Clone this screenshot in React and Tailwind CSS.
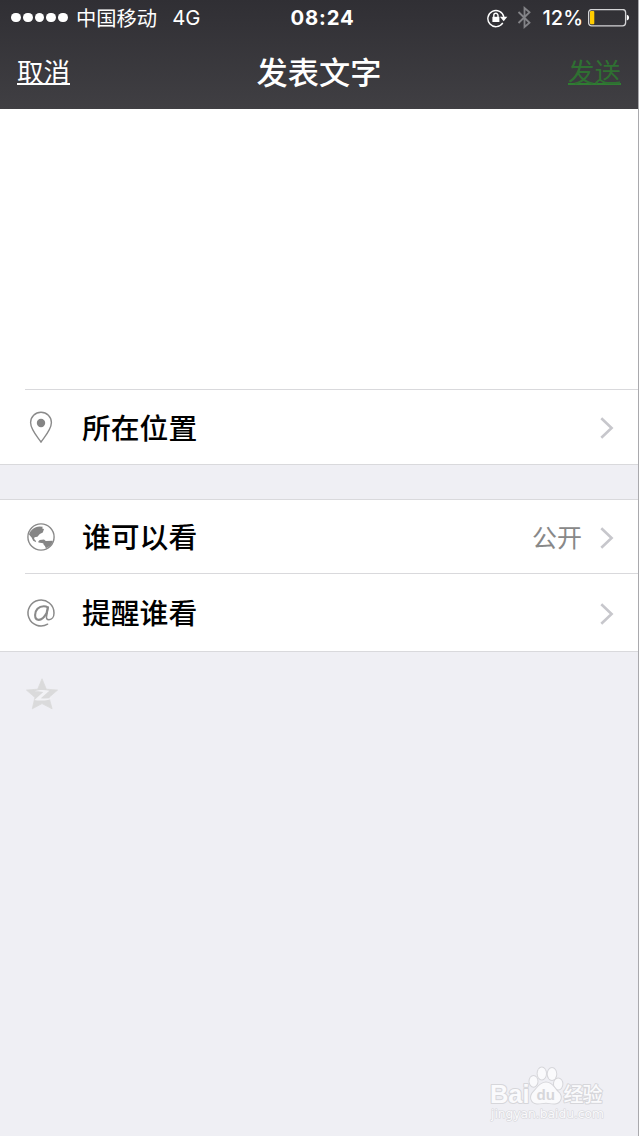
import React from "react";

const CJK = "font-['Noto_Sans_CJK_SC',sans-serif]";
const LATIN = "font-['Inter','Noto_Sans_CJK_SC',sans-serif]";

function Chevron() {
  return (
    <svg className="mt-[2px] mr-[24px] h-[22px] w-[14px] shrink-0" viewBox="0 0 14 22" fill="none">
      <path d="M1.3 1.2 11.6 11 1.3 20.8" stroke="#c7c7cc" strokeWidth="2.6" />
    </svg>
  );
}

function PinIcon() {
  return (
    <svg className="h-8 w-8" viewBox="0 0 32 32" fill="none">
      <path d="M16 31C13 26.5 5.6 19 5.6 11.6a10.4 10.4 0 0 1 20.8 0C26.4 19 19 26.5 16 31Z" stroke="#8a8a8a" strokeWidth="1.4" />
      <circle cx="16" cy="12" r="4.2" fill="#858585" />
    </svg>
  );
}

function GlobeIcon() {
  return (
    <svg className="h-8 w-8" viewBox="0 0 32 32">
      <circle cx="16" cy="16" r="13.1" fill="none" stroke="#8a8a8a" strokeWidth="1.4" />
      <path d="M4 13.5C5.2 9 9.4 5.8 14.5 5.4l3.2.4-.5 1.6 1.8.6-1.2 3.4-3 1.5-2.4 2.9-2.9.4-.4 1.8 1.5 1.4.6 1.8-3-1.5-1.6-3.2Z" fill="#858585" />
      <path d="m13.4 20.2 1.4-1.3 4.2-.3 1.8 1.4 6.4-.2.7.8c-1.4 3.3-3.8 5.5-7 6.6l-1-2.2-1.2-1.2-.5-1.6-4.8-.8Z" fill="#858585" />
    </svg>
  );
}

function AtIcon() {
  return (
    <svg className="h-8 w-8" viewBox="0 0 32 32" fill="none" stroke="#8a8a8a" strokeLinecap="round" strokeLinejoin="round">
      <path d="M22.6 27.2A13 13 0 1 1 29 16c0 4-2.2 6.7-5 6.7-2.2 0-2.9-1.3-2.4-3.5L23.2 10.2" strokeWidth="1.5" />
      <path d="M22.8 10.3c-1.4-.9-2.6-1.1-4-1.1-5.2 0-8.7 4-8.7 8.9 0 3 1.4 4.8 3.7 4.8 3.4 0 6.1-3.6 7.8-6.8l1.2-5.8" strokeWidth="2.1" />
    </svg>
  );
}

function StarIcon() {
  return (
    <svg className="h-8 w-8" viewBox="0 0 32 32">
      <path d="m16 .8 4.3 10.4 11.2.9-8.5 7.3 3.1 11.4L16 25.6 6.3 30.8l2.6-11.4L.5 12.1l11.2-.9Z" fill="#dadadb" stroke="#dadadb" strokeWidth=".8" strokeLinejoin="round" />
      <path d="M8.6 13.3c4-1.4 9.5-1.7 14.8-.6l-8.6 7.6c4.7.5 8.6.2 12.4-.9-3.4 3.1-12.6 3.9-18.8 2.6l8.9-7.9c-3.5-.8-5.8-1-8.7-.8Z" fill="#f2f2f5" />
    </svg>
  );
}

function RotationLock() {
  return (
    <svg className="h-5 w-[22px]" viewBox="0 0 22 20" fill="none" stroke="white" strokeWidth="1.4">
      <path d="M15.8 14.9A8.1 8.1 0 1 1 16.9 9" />
      <path d="M12.9 8.8h7.4l-3.6 4.4Z" fill="white" stroke="none" />
      <rect x="5.4" y="8.8" width="7" height="5.2" fill="white" stroke="none" />
      <path d="M6.8 9.3V7.4a2.1 2.1 0 0 1 4.2 0v1.9" strokeWidth="1.4" />
    </svg>
  );
}

function Bluetooth() {
  return (
    <svg className="h-[23px] w-[14px]" viewBox="0 0 14 23" fill="none" stroke="#838387" strokeWidth="1.8">
      <path d="m1.5 6 11 10.8L7.5 21V2l5 4.2-11 10.8" />
    </svg>
  );
}

function Battery() {
  return (
    <svg className="h-[18px] w-[43px]" viewBox="0 0 43 18">
      <rect x=".6" y=".6" width="37" height="16.2" rx="3" fill="none" stroke="#d4d4d6" strokeWidth="1.3" />
      <rect x="2" y="2.1" width="4.3" height="13.2" rx="1" fill="#ffcc00" />
      <path d="M38.8 5.8c3 .7 3 5 0 5.8Z" fill="white" />
    </svg>
  );
}

function Row({ icon, label, value, height }) {
  return (
    <div className={`flex items-center bg-white ${height}`}>
      <div className="ml-[25px] flex w-[57px]">{icon}</div>
      <span className={`${CJK} grow text-[28.8px] leading-none font-medium text-black`}>{label}</span>
      {value && <span className={`${CJK} mr-[18px] text-[25px] leading-none text-[#888888]`}>{value}</span>}
      <Chevron />
    </div>
  );
}

function Watermark() {
  return (
    <svg className="h-[62px] w-[122px]" viewBox="0 0 122 62">
      <g fill="#fafafc" stroke="#d6d6da" strokeWidth="2" strokeLinejoin="round" style={{ paintOrder: "stroke" }}>
        <text x="3" y="38.5" fontFamily="Liberation Sans, sans-serif" fontSize="25.5" fontWeight="700" textLength="39.5" lengthAdjust="spacingAndGlyphs">Bai</text>
        <ellipse cx="46.5" cy="17.3" rx="4" ry="5.4" />
        <ellipse cx="54.8" cy="9.5" rx="4.2" ry="6" />
        <ellipse cx="65" cy="10" rx="4.3" ry="6" />
        <ellipse cx="71.2" cy="20" rx="4.2" ry="5.6" />
        <path d="M59 18.5c6 0 8 5.5 12 9.5 5 4 3 11-3 11.5-3.5.3-6-.8-9-.8s-6 1-9 .8c-6-.5-8-7-3.5-11.5 4-4 6.5-9.5 12.5-9.5Z" />
        <text x="76.5" y="37.5" fontFamily="Noto Sans CJK SC, sans-serif" fontSize="20" fontWeight="500" textLength="39">经验</text>
        <text x="4" y="53.5" fontFamily="DejaVu Sans, sans-serif" fontSize="12.3" strokeWidth="1.2" textLength="113" lengthAdjust="spacingAndGlyphs">jingyan.baidu.com</text>
      </g>
      <text x="49.5" y="36" fontFamily="Liberation Sans, sans-serif" fontSize="15" fontWeight="700" fill="#d6d6da" textLength="18.5" lengthAdjust="spacingAndGlyphs">du</text>
    </svg>
  );
}

export default function App() {
  return (
    <div className="flex h-[1136px] w-[639px] flex-col border-r border-[#a9a9ad] bg-[#efeff4]">
      <header className="h-[109px] shrink-0 bg-linear-to-b from-[#302f34] to-[#403f43] text-white">
        <div className="grid h-[35px] grid-cols-[1fr_auto_1fr] items-center">
          <div className="flex items-center pl-[11px]">
            <div className="flex gap-[2px]">
              {[0, 1, 2, 3, 4].map((i) => (
                <span key={i} className="size-[9.8px] rounded-full bg-white" />
              ))}
            </div>
            <span className={`${CJK} ml-[8px] text-[20.3px] leading-none`}>中国移动</span>
            <span className={`${LATIN} mt-[2px] ml-[15px] text-[20.3px] leading-none`}>4G</span>
          </div>
          <span className={`${LATIN} mt-[2px] pl-[7px] text-[20.3px] leading-none font-bold tracking-[0.8px]`}>08:24</span>
          <div className="flex items-center justify-end pr-[7px]">
            <RotationLock />
            <span className="ml-[8px] flex"><Bluetooth /></span>
            <span className={`${LATIN} ml-[12px] text-[20px] leading-none font-medium`}>12%</span>
            <span className="ml-[5px] flex"><Battery /></span>
          </div>
        </div>
        <nav className={`${CJK} grid h-[72px] grid-cols-[1fr_auto_1fr] items-center px-[17px]`}>
          <span className="h-[27px] justify-self-start border-b-2 border-white text-[26.5px] leading-[26px]">取消</span>
          <span className="text-[31.2px] leading-none font-medium">发表文字</span>
          <span className="h-[27px] justify-self-end border-b-2 border-[#2f7d32] text-[26.5px] leading-[26px] text-[#2f7032]">发送</span>
        </nav>
      </header>

      <main>
        <section className="border-b border-[#d9d9dc] bg-white">
          <div className="h-[280px]" />
          <div className="ml-[25px] h-px bg-[#d9d9dc]" />
          <Row height="h-[74px]" icon={<PinIcon />} label="所在位置" />
        </section>
        <section className="mt-[34px] border-y border-[#d9d9dc] bg-white">
          <Row height="h-[73px]" icon={<GlobeIcon />} label="谁可以看" value="公开" />
          <div className="ml-[25px] h-px bg-[#d9d9dc]" />
          <Row height="h-[77px]" icon={<AtIcon />} label="提醒谁看" />
        </section>
        <div className="pt-[26px] pl-[26px]">
          <StarIcon />
        </div>
      </main>

      <footer className="mt-auto flex justify-end pr-[29px] pb-[10px]">
        <Watermark />
      </footer>
    </div>
  );
}
